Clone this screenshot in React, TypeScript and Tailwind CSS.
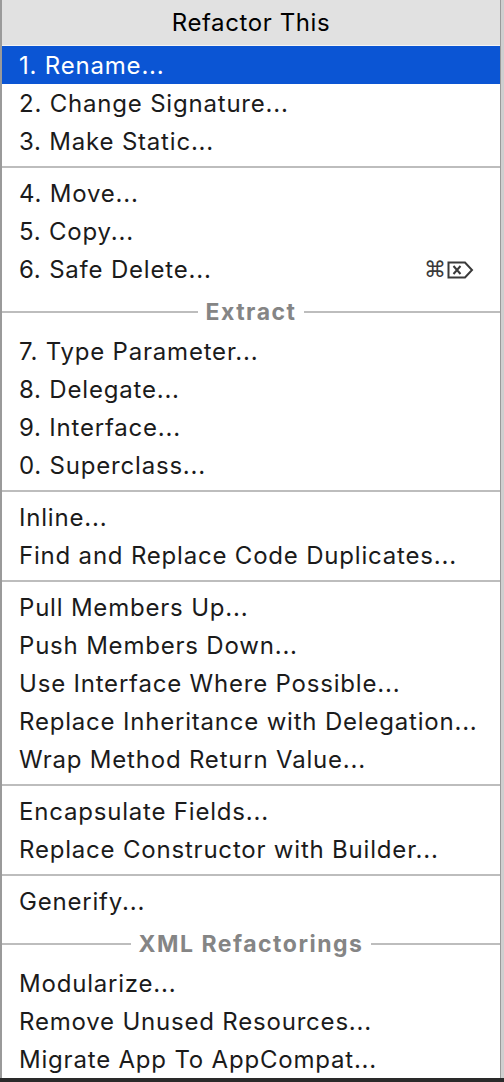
import React from "react";

type Item =
  | { kind: "item"; label: string; selected?: boolean; shortcut?: boolean }
  | { kind: "sep" }
  | { kind: "group"; label: string };

const items: Item[] = [
  { kind: "item", label: "1. Rename...", selected: true },
  { kind: "item", label: "2. Change Signature..." },
  { kind: "item", label: "3. Make Static..." },
  { kind: "sep" },
  { kind: "item", label: "4. Move..." },
  { kind: "item", label: "5. Copy..." },
  { kind: "item", label: "6. Safe Delete...", shortcut: true },
  { kind: "group", label: "Extract" },
  { kind: "item", label: "7. Type Parameter..." },
  { kind: "item", label: "8. Delegate..." },
  { kind: "item", label: "9. Interface..." },
  { kind: "item", label: "0. Superclass..." },
  { kind: "sep" },
  { kind: "item", label: "Inline..." },
  { kind: "item", label: "Find and Replace Code Duplicates..." },
  { kind: "sep" },
  { kind: "item", label: "Pull Members Up..." },
  { kind: "item", label: "Push Members Down..." },
  { kind: "item", label: "Use Interface Where Possible..." },
  { kind: "item", label: "Replace Inheritance with Delegation..." },
  { kind: "item", label: "Wrap Method Return Value..." },
  { kind: "sep" },
  { kind: "item", label: "Encapsulate Fields..." },
  { kind: "item", label: "Replace Constructor with Builder..." },
  { kind: "sep" },
  { kind: "item", label: "Generify..." },
  { kind: "group", label: "XML Refactorings" },
  { kind: "item", label: "Modularize..." },
  { kind: "item", label: "Remove Unused Resources..." },
  { kind: "item", label: "Migrate App To AppCompat..." },
];

// forward-delete key glyph, drawn since fonts vary
function DeleteIcon() {
  return (
    <svg width="27" height="18" viewBox="0 0 27 18" fill="none" stroke="#3a3a3a" strokeWidth="2">
      <path d="M1.5 1.5 H18 L25 9 L18 16.5 H1.5 Z" strokeLinejoin="miter" />
      <path d="M6.5 5 L13.5 13 M13.5 5 L6.5 13" />
    </svg>
  );
}

export default function App() {
  const font = { fontFamily: "Inter, 'Noto Sans', sans-serif" };
  return (
    <div className="w-[504px] h-[1082px] bg-[#cfcfcf] overflow-hidden" style={font}>
      <div className="w-[501px] h-[1078px] bg-white border-l-2 border-r border-[#9a9a9a] flex flex-col">
        <div className="h-[46px] bg-[#e1e1e1] flex items-center justify-center text-[24px] tracking-[0.6px] text-black pt-[1px]">
          Refactor This
        </div>
        <div className="h-[1px] bg-[#f4f4f4]" />
        {items.map((it, i) => {
          if (it.kind === "sep")
            return (
              <div key={i} className="h-[14px] flex items-center">
                <div className="w-full h-[2px] bg-[#bdbdbd]" />
              </div>
            );
          if (it.kind === "group")
            return (
              <div key={i} className="h-[45px] flex items-center gap-[8px] pt-[4px]">
                <div className="flex-1 h-[2px] bg-[#bdbdbd]" />
                <span className="text-[23px] font-bold text-[#858585] tracking-[1.5px] whitespace-nowrap">{it.label}</span>
                <div className="flex-1 h-[2px] bg-[#bdbdbd]" />
              </div>
            );
          return (
            <div
              key={i}
              className={
                it.selected
                  ? "h-[38px] flex items-center justify-between pl-[17px] pr-[26px] pt-[2px] bg-[#0b55d4] text-white text-[24px] tracking-[0.8px] whitespace-nowrap"
                  : "h-[38px] flex items-center justify-between pl-[17px] pr-[26px] pt-[2px] text-[#1b1b1b] text-[24px] tracking-[0.8px] whitespace-nowrap"
              }
            >
              <span>{it.label}</span>
              {it.shortcut && (
                <span className="flex items-center gap-[1px] text-[#3a3a3a] tracking-normal">
                  <span className="text-[22px] leading-none" style={{ fontFamily: "'DejaVu Sans', sans-serif" }}>⌘</span>
                  <DeleteIcon />
                </span>
              )}
            </div>
          );
        })}
      </div>
      <div className="h-[4px] bg-[#2a2a2a]" />
    </div>
  );
}
